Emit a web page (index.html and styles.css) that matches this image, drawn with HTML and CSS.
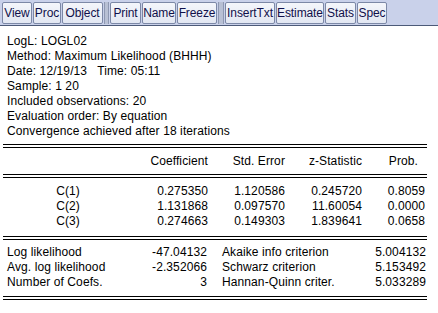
FILE: index.html
```html
<!DOCTYPE html>
<html lang="en">
<head>
    <meta charset="UTF-8">
    <title>LogL: LOGL02</title>
    <link rel="stylesheet" href="styles.css">
</head>
<body>
    <div class="toolbar">
        <button class="tb-btn w30">View</button>
        <button class="tb-btn w28">Proc</button>
        <button class="tb-btn w41">Object</button>
        <span class="tb-sep"></span>
        <button class="tb-btn w31">Print</button>
        <button class="tb-btn w34">Name</button>
        <button class="tb-btn w40">Freeze</button>
        <span class="tb-sep wide"></span>
        <button class="tb-btn w50">InsertTxt</button>
        <button class="tb-btn w48">Estimate</button>
        <button class="tb-btn w31">Stats</button>
        <button class="tb-btn w30">Spec</button>
    </div>

    <div class="output">
        <div class="info">
            <div>LogL: LOGL02</div>
            <div>Method: Maximum Likelihood (BHHH)</div>
            <div>Date: 12/19/13&nbsp;&nbsp; Time: 05:11</div>
            <div>Sample: 1 20</div>
            <div>Included observations: 20</div>
            <div>Evaluation order: By equation</div>
            <div>Convergence achieved after 18 iterations</div>
        </div>

        <div class="rule"></div>
        <div class="coef-grid head">
            <span></span>
            <span class="num">Coefficient</span>
            <span class="num">Std. Error</span>
            <span class="num">z-Statistic</span>
            <span class="num prob-head">Prob.</span>
        </div>
        <div class="rule"></div>

        <div class="coef-grid rows">
            <span class="name">C(1)</span>
            <span class="num">0.275350</span>
            <span class="num">1.120586</span>
            <span class="num">0.245720</span>
            <span class="num prob">0.8059</span>

            <span class="name">C(2)</span>
            <span class="num">1.131868</span>
            <span class="num">0.097570</span>
            <span class="num">11.60054</span>
            <span class="num prob">0.0000</span>

            <span class="name">C(3)</span>
            <span class="num">0.274663</span>
            <span class="num">0.149303</span>
            <span class="num">1.839641</span>
            <span class="num prob">0.0658</span>
        </div>

        <div class="rule"></div>
        <div class="stats-grid">
            <span class="label">Log likelihood</span>
            <span class="num">-47.04132</span>
            <span class="label right">Akaike info criterion</span>
            <span class="num">5.004132</span>

            <span class="label">Avg. log likelihood</span>
            <span class="num">-2.352066</span>
            <span class="label right">Schwarz criterion</span>
            <span class="num">5.153492</span>

            <span class="label">Number of Coefs.</span>
            <span class="num">3</span>
            <span class="label right">Hannan-Quinn criter.</span>
            <span class="num">5.033289</span>
        </div>
        <div class="rule"></div>
    </div>
</body>
</html>
```

FILE: styles.css
```css
body {
    margin: 0;
    padding: 0;
    background-color: #ffffff;
    font-family: "Liberation Sans", Arial, sans-serif;
    font-size: 12px;
    letter-spacing: 0.1px;
    color: #000000;
}

/* toolbar */

.toolbar {
    display: flex;
    align-items: center;
    gap: 1px;
    height: 25px;
    padding: 0 2px;
    background-color: #c9d1ea;
    border-bottom: 1px solid #4c5a78;
}

.tb-btn {
    height: 22px;
    padding: 0;
    margin: 0;
    font-family: "Liberation Sans", Arial, sans-serif;
    font-size: 12px;
    letter-spacing: -0.1px;
    color: #10104a;
    background: linear-gradient(#f4f6fb, #e2e7f2);
    border: 1px solid #7c88a6;
    border-radius: 2px;
}

.w28 { width: 28px; }
.w30 { width: 30px; }
.w31 { width: 31px; }
.w34 { width: 34px; }
.w40 { width: 40px; }
.w41 { width: 41px; }
.w48 { width: 48px; }
.w50 { width: 50px; }

.tb-sep {
    box-sizing: border-box;
    width: 5px;
    height: 22px;
    background-color: #b8c0d4;
    border-left: 1px solid #8e98b2;
    border-right: 1px solid #8e98b2;
}

.tb-sep.wide {
    width: 6px;
}

/* output */

.output {
    width: 424px;
    padding: 8px 0 0 3px;
}

.info {
    padding-left: 4px;
    line-height: 15px;
}

.rule {
    height: 2px;
    border-top: 1px solid #000;
    border-bottom: 1px solid #000;
}

.info + .rule {
    margin-top: 5px;
}

.coef-grid {
    display: grid;
    grid-template-columns: 130px 75px 77px 77px 65px;
}

.coef-grid.head {
    height: 26px;
    align-items: center;
}

.coef-grid.rows {
    padding: 6px 0 7px;
    line-height: 15px;
}

.num {
    text-align: right;
}

.name {
    text-align: center;
}

.prob {
    padding-right: 2px;
}

.prob-head {
    padding-right: 9px;
}

.stats-grid {
    display: grid;
    grid-template-columns: 130px 75px 164px 55px;
    padding: 5px 0 6px;
    line-height: 15px;
}

.stats-grid .label {
    padding-left: 4px;
}

.stats-grid .label.right {
    padding-left: 14px;
}

.stats-grid .num {
    padding-right: 1px;
}
```
